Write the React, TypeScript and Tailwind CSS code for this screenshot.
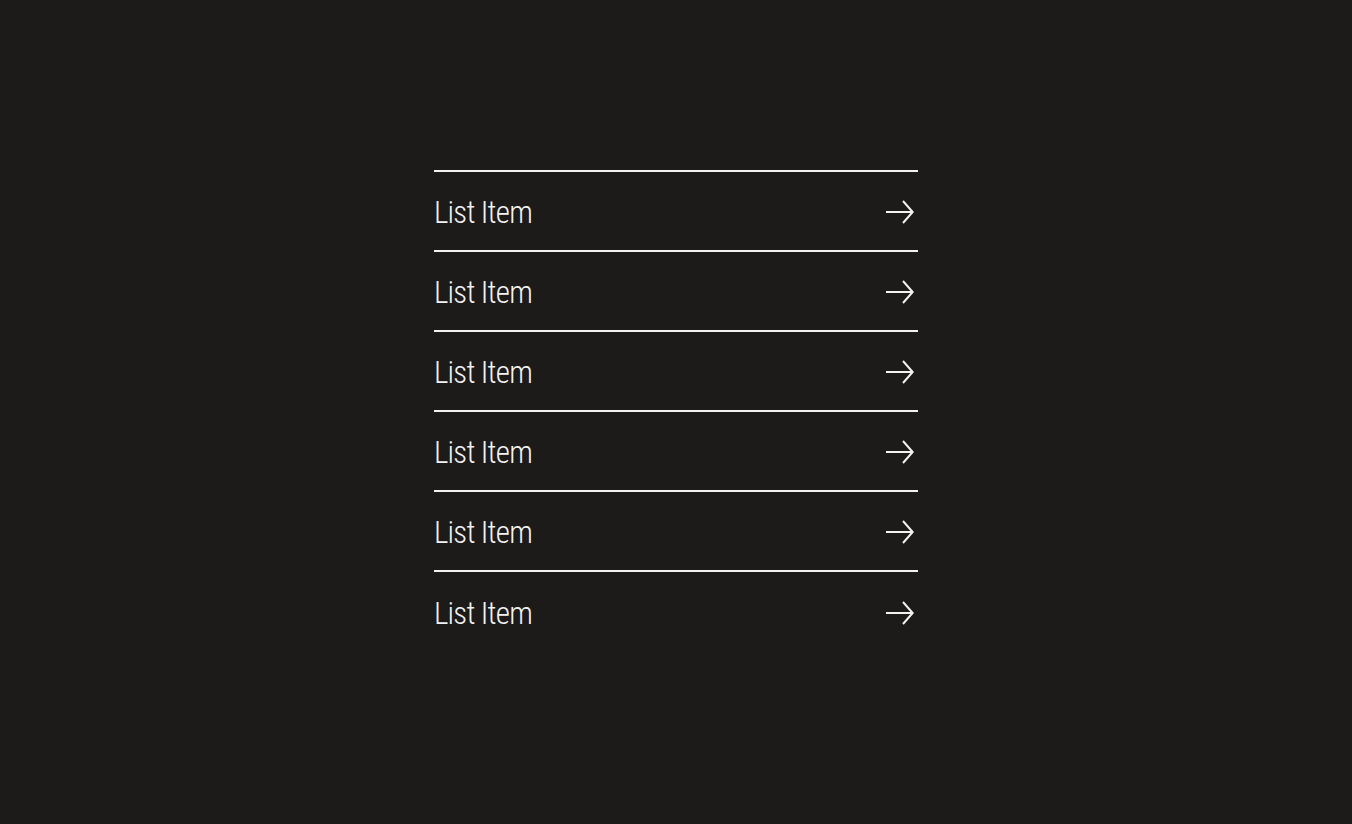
const items = ['List Item', 'List Item', 'List Item', 'List Item', 'List Item', 'List Item'];

const Arrow = () => (
  <svg width="28" height="26" viewBox="0 0 28 26" fill="none" stroke="currentColor" strokeWidth="2">
    <path d="M0 13H26.5" />
    <path d="M17 2L26.7 13L17 24" />
  </svg>
);

export default function App() {
  return (
    <div className="min-h-screen bg-[#1c1b1a] text-[#f2f2f2]" style={{ fontFamily: '"Roboto Condensed", "Liberation Sans Narrow", "DejaVu Sans Condensed", sans-serif' }}>
      <ul className="mx-auto w-[484px] pt-[170px]">
        <li className="border-t-2 border-[#f2f2f2]" />
        {items.map((item, i) => (
          <li
            key={i}
            className={`flex h-[80px] items-center justify-between ${i < items.length - 1 ? 'border-b-2 border-[#f2f2f2]' : ''}`}
          >
            <span className="pt-[2px] text-[31px] font-light leading-none tracking-[-0.8px]">{item}</span>
            <span className="mr-[4px] pt-[1px]">
              <Arrow />
            </span>
          </li>
        ))}
      </ul>
    </div>
  );
}
